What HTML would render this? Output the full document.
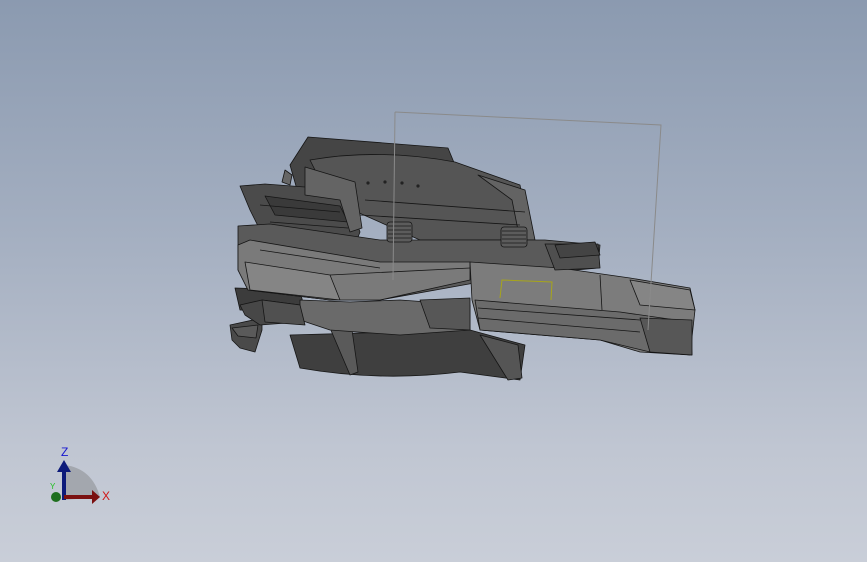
<!DOCTYPE html>
<html><head><style>
html,body{margin:0;padding:0;}
body{width:867px;height:562px;overflow:hidden;background:linear-gradient(180deg,#8b9ab0 0%,#a3aec0 40%,#c0c6d2 80%,#c9ced8 100%);font-family:"Liberation Sans",sans-serif;}
svg{position:absolute;left:0;top:0;}
</style></head><body>
<svg width="867" height="562" viewBox="0 0 867 562" stroke="#151515" stroke-width="0.8" stroke-linejoin="round">
<!-- bottom disk -->
<path d="M290,335 L300,368 Q380,382 460,372 L520,380 L525,345 L470,330 Z" fill="#3f3f3f"/>
<path d="M330,328 L350,375 L358,372 L352,330 Z" fill="#5a5a5a"/>
<path d="M480,335 L508,380 L522,378 L518,345 Z" fill="#555"/>
<!-- left lower pieces -->
<path d="M230,325 L262,318 L262,330 L255,352 L240,348 L232,340 Z" fill="#4a4a4a"/>
<path d="M232,328 L258,325 L256,338 L238,336 Z" fill="#5a5a5a"/>
<path d="M235,288 L300,290 L305,312 L240,310 Z" fill="#3c3c3c"/>
<path d="M240,305 L262,300 L300,305 L300,322 L260,325 L245,315 Z" fill="#474747"/>
<!-- top dome back -->
<path d="M290,165 L308,137 L448,148 L455,165 L455,200 L300,200 Z" fill="#454545"/>
<path d="M310,160 Q380,148 455,162 L520,185 L530,240 L420,240 L330,200 Z" fill="#555"/>
<path d="M285,170 L292,175 L290,185 L282,182 Z" fill="#666"/>
<!-- left-top block -->
<path d="M240,186 L265,184 L345,190 L360,232 L355,245 L265,240 L250,210 Z" fill="#4b4b4b"/>
<path d="M265,196 L340,206 L348,222 L275,215 Z" fill="#3a3a3a"/>
<path d="M270,222 L348,228 M260,205 L340,212" fill="none"/>
<path d="M305,167 L355,182 L362,228 L350,232 L340,200 L305,195 Z" fill="#646464"/>
<path d="M478,175 L525,190 L535,240 L520,240 L512,200 Z" fill="#636363"/>
<path d="M365,200 L525,212 M360,215 L520,225" fill="none"/>
<!-- holes -->
<g fill="#222" stroke="none"><circle cx="368" cy="183" r="1.6"/><circle cx="385" cy="182" r="1.6"/><circle cx="402" cy="183" r="1.6"/><circle cx="418" cy="186" r="1.6"/></g>
<!-- middle plate -->
<path d="M238,226 L270,224 L380,240 L545,240 L600,245 L598,268 L555,272 L480,282 L380,300 L330,300 L248,290 L238,270 Z" fill="#5a5a5a"/>
<path d="M238,245 L250,240 L380,262 L470,262 L470,280 L380,300 L330,300 L248,290 L238,270 Z" fill="#7a7a7a"/>
<path d="M245,262 L330,275 L340,300 L250,290 Z" fill="#858585"/>
<path d="M330,275 L470,268 M260,250 L380,268" fill="none"/>
<path d="M300,300 L350,302 L400,300 L470,305 L470,330 L400,335 L330,330 L300,320 Z" fill="#6a6a6a"/>
<path d="M420,300 L470,298 L470,330 L430,328 Z" fill="#575757"/>
<path d="M262,300 L300,305 L305,325 L265,322 Z" fill="#505050"/>
<!-- threaded studs -->
<g fill="#5c5c5c"><rect x="387" y="222" width="25" height="20" rx="3"/><rect x="501" y="227" width="26" height="20" rx="3"/></g>
<g stroke="#2a2a2a" stroke-width="1"><path d="M388,226H411M388,230H411M388,234H411M388,238H411"/><path d="M502,231H526M502,235H526M502,239H526M502,243H526"/></g>
<!-- right arm -->
<path d="M470,262 L560,268 L630,278 L690,288 L695,310 L690,355 L640,352 L600,340 L480,330 L472,300 Z" fill="#7c7c7c"/>
<path d="M475,300 L620,312 L690,322 L692,355 L650,352 L600,340 L480,330 Z" fill="#6b6b6b"/>
<path d="M630,280 L690,290 L695,310 L640,305 Z" fill="#858585"/>
<path d="M640,318 L692,320 L692,355 L650,352 Z" fill="#575757"/>
<path d="M478,308 L640,320 M478,318 L640,332 M600,275 L602,310" fill="none"/>
<path d="M545,244 L598,244 L600,268 L555,270 Z" fill="#4f4f4f"/>
<path d="M555,245 L595,242 L600,255 L560,258 Z" fill="#444"/>
</svg>
<svg width="867" height="562" viewBox="0 0 867 562">
<path d="M395,112 L393,280 M395,112 L661,125 L648,330" fill="none" stroke="#8a8a8a" stroke-width="1"/>
<path d="M500,298 L502,280 L552,282 L551,300" fill="none" stroke="#a7a51a" stroke-width="1"/>
<path d="M64,500 L64,465 Q92,468 100,497 Z" fill="#a3a7ae"/>
<rect x="62" y="470" width="4" height="30" fill="#0c1a7a"/>
<path d="M57,472 L64,460 L71,472 Z" fill="#0c1a7a"/>
<rect x="64" y="495" width="30" height="4" fill="#7a1010"/>
<path d="M92,490 L100,497 L92,504 Z" fill="#7a1010"/>
<circle cx="56" cy="497" r="5" fill="#1e6e1e"/>
<text x="61" y="456" fill="#1616d0" font-size="12">Z</text>
<text x="102" y="500" fill="#d01616" font-size="12">X</text>
<text x="50" y="489" fill="#20c020" font-size="8">Y</text>
</svg>
</body></html>
